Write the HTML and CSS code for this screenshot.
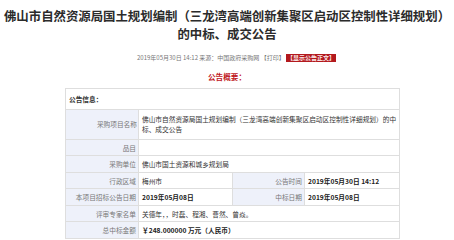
FILE: index.html
```html
<!DOCTYPE html>
<html lang="zh-CN">
<head>
  <meta charset="UTF-8">
  <title>中标、成交公告</title>
  <link rel="stylesheet" href="styles.css">
</head>
<body>
  <div class="page">
    <h1 class="title">佛山市自然资源局国土规划编制（三龙湾高端创新集聚区启动区控制性详细规划）的中标、成交公告</h1>

    <p class="meta">
      2019年05月30日 14:12 来源：中国政府采购网 【打印】 <span class="show-btn">【显示公告正文】</span>
    </p>

    <h2 class="summary">公告概要：</h2>

    <table class="info">
      <colgroup>
        <col class="c-label">
        <col class="c-value">
        <col class="c-label2">
        <col class="c-value2">
      </colgroup>
      <tr>
        <td colspan="4" class="head">公告信息：</td>
      </tr>
      <tr class="tall">
        <td class="label">采购项目名称</td>
        <td colspan="3">佛山市自然资源局国土规划编制（三龙湾高端创新集聚区启动区控制性详细规划）的中标、成交公告</td>
      </tr>
      <tr>
        <td class="label">品目</td>
        <td colspan="3"></td>
      </tr>
      <tr>
        <td class="label">采购单位</td>
        <td colspan="3">佛山市国土资源和城乡规划局</td>
      </tr>
      <tr>
        <td class="label">行政区域</td>
        <td>梅州市</td>
        <td class="label">公告时间</td>
        <td class="strong">2019年05月30日 14:12</td>
      </tr>
      <tr>
        <td class="label">本项目招标公告日期</td>
        <td class="strong">2019年05月08日</td>
        <td class="label">中标日期</td>
        <td class="strong">2019年05月08日</td>
      </tr>
      <tr>
        <td class="label">评审专家名单</td>
        <td colspan="3">关德年，，时磊、程湘、曹然、曾焱。</td>
      </tr>
      <tr>
        <td class="label">总中标金额</td>
        <td colspan="3" class="strong">￥248.000000 万元（人民币）</td>
      </tr>
    </table>
  </div>
</body>
</html>
```

FILE: styles.css
```css
* {
    margin: 0;
    padding: 0;
    box-sizing: border-box;
}

body {
    background: #fff;
    color: #333;
    font-family: "Noto Sans CJK SC", "Noto Sans", sans-serif;
}

.page {
    width: 454px;
}

.title {
    margin-top: 7px;
    font-size: 12.4px;
    line-height: 18px;
    font-weight: bold;
    color: #2b2b2b;
    text-align: center;
}

.meta {
    margin-top: 10px;
    padding-left: 137px;
    font-size: 6px;
    line-height: 10px;
    color: #777;
}

.show-btn {
    display: inline-block;
    background: #b3191e;
    color: #fbeaea;
    line-height: 8px;
    padding: 0 1px;
    font-weight: bold;
}

.summary {
    margin-top: 9px;
    text-align: center;
    font-size: 7.6px;
    line-height: 10px;
    color: #c0161c;
    font-weight: bold;
}

.info {
    margin: 6px 0 0 65px;
    width: 334px;
    table-layout: fixed;
    border-collapse: collapse;
    font-size: 6.7px;
    line-height: 10px;
    color: #333;
}

.c-label { width: 73px; }
.c-value { width: 94px; }
.c-label2 { width: 72px; }
.c-value2 { width: 95px; }

.info td {
    border: 1px solid #dedede;
    padding: 3px 1px 2.5px 3px;
    vertical-align: middle;
}

.info td.head {
    padding: 5px 3px;
    font-weight: bold;
    color: #333;
}

.info tr.tall td {
    padding: 4px 1px 4.5px 3px;
}

.info td.label {
    background: #eef1fa;
    color: #777;
    text-align: right;
    white-space: nowrap;
    padding-right: 2px;
}

.info td.strong {
    font-weight: bold;
    color: #222;
}
```
